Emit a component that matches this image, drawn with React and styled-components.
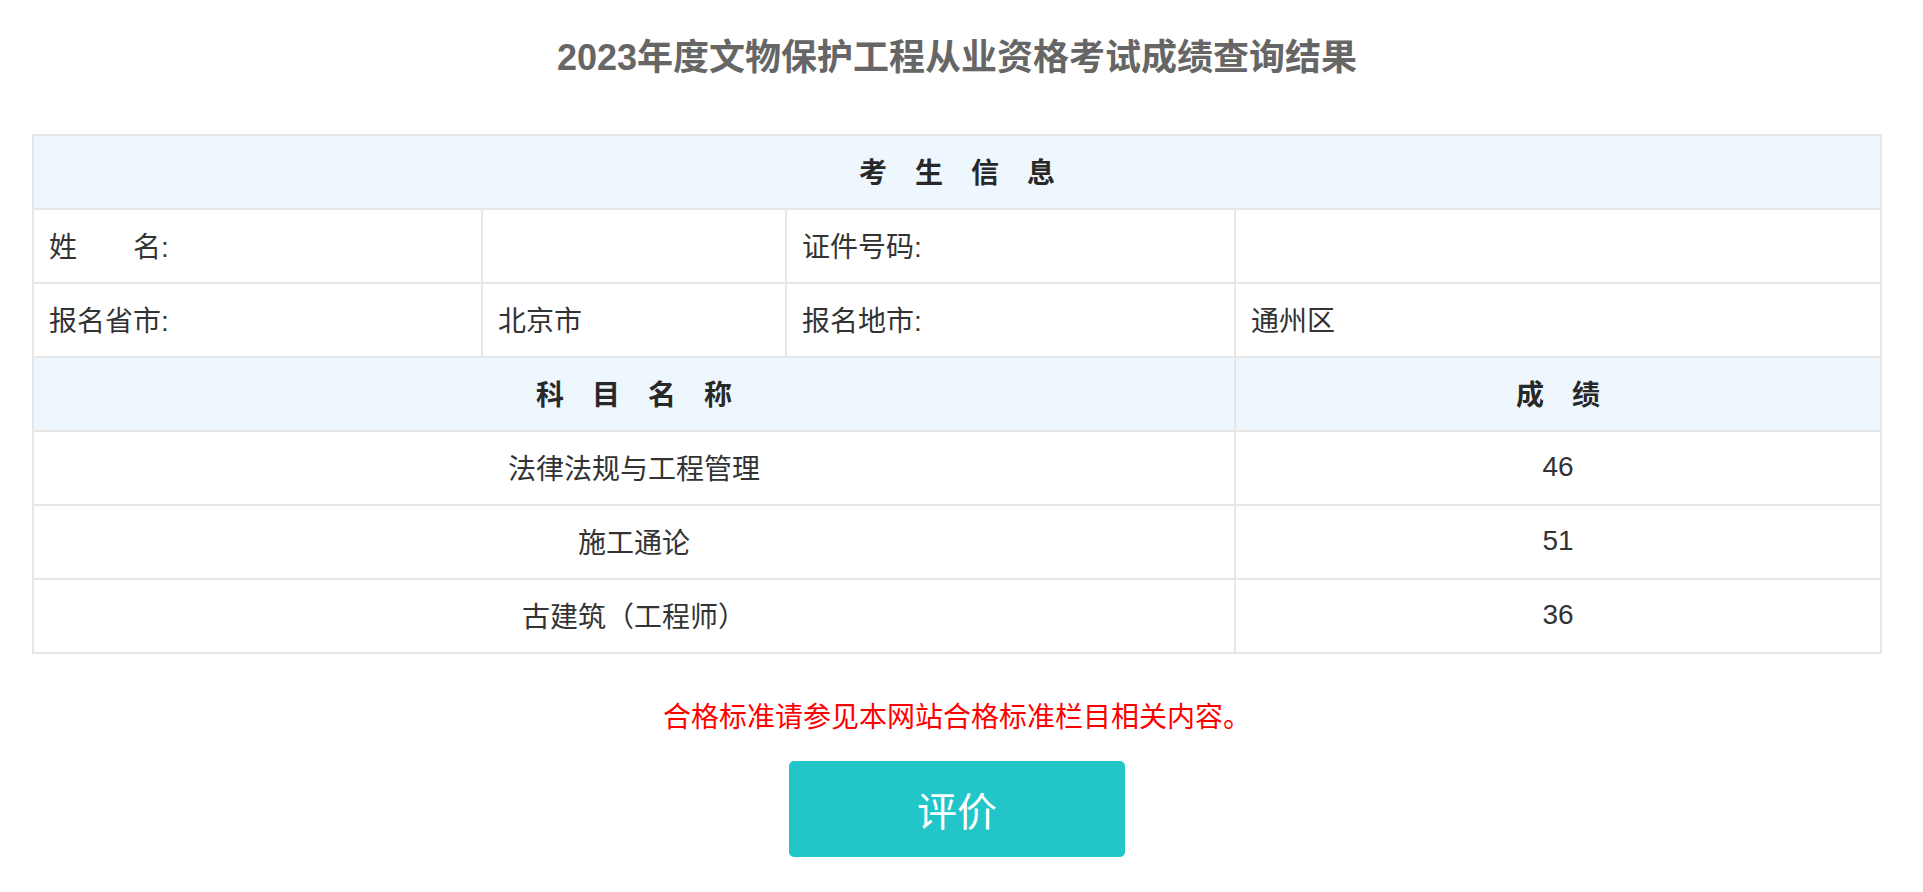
import React from 'react';
import styled, { createGlobalStyle } from 'styled-components';

const GlobalStyle = createGlobalStyle`
	html, body {
		margin: 0;
		padding: 0;
		background: #fff;
	}
	body {
		font-family: "Liberation Sans", "Noto Sans CJK SC", sans-serif;
		color: #333;
	}
`;

const Page = styled.main`
	display: flex;
	flex-direction: column;
	align-items: center;
	padding: 33px 41px 36px 32px;
`;

const Title = styled.h1`
	margin: 0 0 51px;
	font-size: 36px;
	line-height: 50px;
	font-weight: bold;
	color: #666;
`;

const ScoreTable = styled.table`
	width: 100%;
	border-collapse: collapse;
	table-layout: fixed;
	font-size: 28px;

	td,
	th {
		height: 69px;
		border: 2px solid #e6e6e6;
		padding: 0 15px 3px;
		vertical-align: middle;
	}
`;

const HeadCell = styled.th`
	background: #eef6fe;
	font-weight: bold;
	color: #282828;
	text-align: center;
`;

const Spaced = styled.span`
	letter-spacing: ${(p) => p.gap || '1em'};
	margin-right: -${(p) => p.gap || '1em'};
`;

const Cell = styled.td`
	text-align: ${(p) => (p.center ? 'center' : 'left')};
	color: #333;
`;

const Note = styled.p`
	margin: 44px 0 23px;
	font-size: 28px;
	line-height: 40px;
	color: #ff0000;
`;

const RateButton = styled.button`
	width: 336px;
	height: 96px;
	border: none;
	border-radius: 5px;
	background: #22c5c8;
	color: #fff;
	font-family: inherit;
	font-size: 40px;
	cursor: pointer;
`;

const subjects = [
	{ name: '法律法规与工程管理', score: 46 },
	{ name: '施工通论', score: 51 },
	{ name: '古建筑（工程师）', score: 36 },
];

const App = () => {
	return (
		<>
			<GlobalStyle />
			<Page>
				<Title>2023年度文物保护工程从业资格考试成绩查询结果</Title>
				<ScoreTable>
					<colgroup>
						<col style={{ width: '449px' }} />
						<col style={{ width: '304px' }} />
						<col style={{ width: '449px' }} />
						<col />
					</colgroup>
					<tbody>
						<tr>
							<HeadCell colSpan={4}>
								<Spaced>考生信息</Spaced>
							</HeadCell>
						</tr>
						<tr>
							<Cell>姓　　名:</Cell>
							<Cell />
							<Cell>证件号码:</Cell>
							<Cell />
						</tr>
						<tr>
							<Cell>报名省市:</Cell>
							<Cell>北京市</Cell>
							<Cell>报名地市:</Cell>
							<Cell>通州区</Cell>
						</tr>
						<tr>
							<HeadCell colSpan={3}>
								<Spaced>科目名称</Spaced>
							</HeadCell>
							<HeadCell>
								<Spaced>成绩</Spaced>
							</HeadCell>
						</tr>
						{subjects.map((s) => (
							<tr key={s.name}>
								<Cell colSpan={3} center>
									{s.name}
								</Cell>
								<Cell center>{s.score}</Cell>
							</tr>
						))}
					</tbody>
				</ScoreTable>
				<Note>合格标准请参见本网站合格标准栏目相关内容。</Note>
				<RateButton type="button">评价</RateButton>
			</Page>
		</>
	);
};

export default App;
